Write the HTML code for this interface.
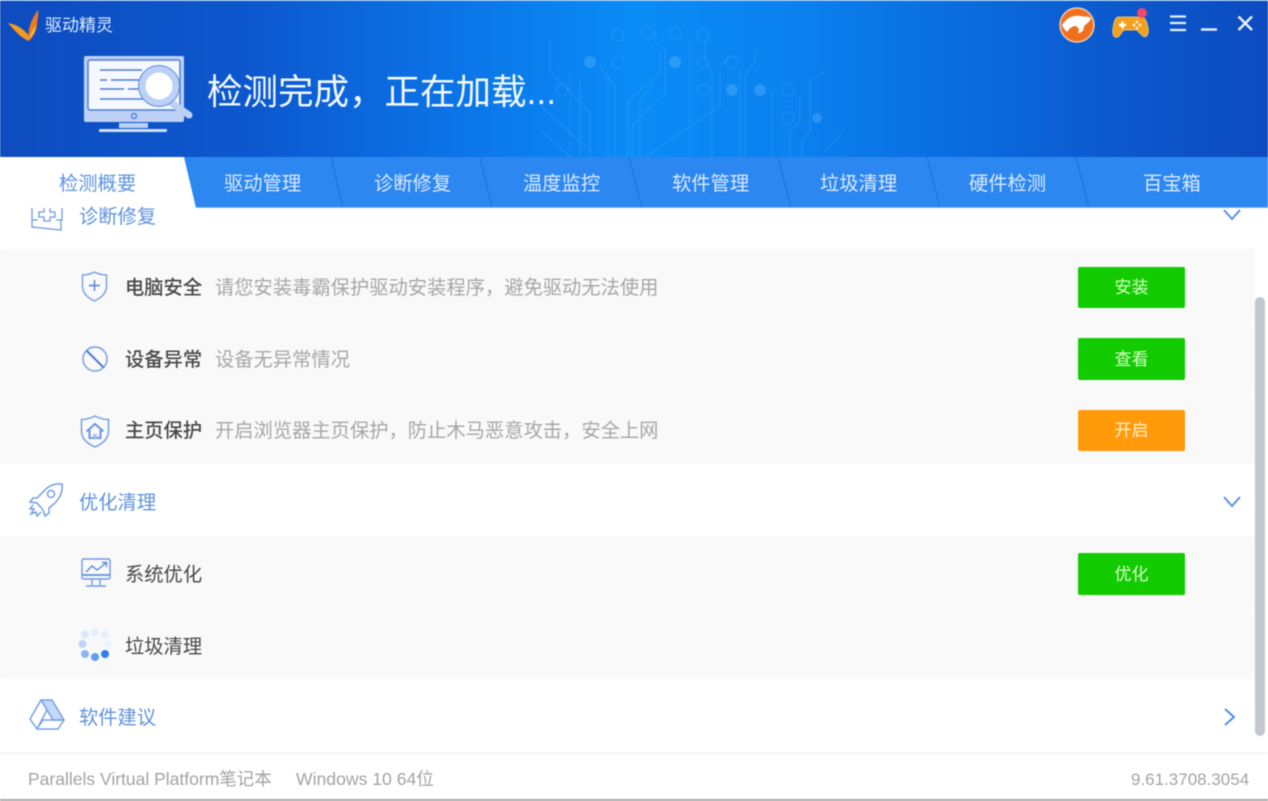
<!DOCTYPE html>
<html lang="zh-CN">
<head>
<meta charset="utf-8">
<title>驱动精灵</title>
<style>
html,body{margin:0;padding:0;background:#fff;}
#app{position:relative;width:1268px;height:801px;overflow:hidden;background:#fff;font-family:"Liberation Sans","Noto Sans CJK SC",sans-serif;filter:blur(.6px);}
#app div,#app svg{position:absolute;}
.t{white-space:nowrap;line-height:1;}
.hdr{left:0;top:1px;width:1268px;height:156px;background:linear-gradient(90deg,#0e4cbf 0%,#0d58cf 20%,#0b78ea 38%,#0a8cf7 50%,#0a82f0 62%,#0a6ee0 75%,#0c56cb 90%,#0d4bc1 100%);}
.tabbar{left:0;top:157px;width:1268px;height:51px;background:#2d87f1;border-bottom:0;}
.tab{top:175px;font-size:19.3px;color:#d9eaff;}
.sec{font-size:19.3px;color:#5f93dc;left:79px;}
.row{left:0;width:1255px;background:#f9f9f9;}
.name{left:125px;font-size:19.3px;color:#484848;}
.desc{left:215px;font-size:19.3px;color:#a6a6a6;}
.btn{left:1078px;width:107px;border-radius:2px;background:#12cb00;color:#d6ffc8;font-size:17px;text-align:center;}
</style>
</head>
<body>
<div id="app">
  <div class="hdr"></div>
  <svg style="left:540px;top:1px" width="340" height="156" viewBox="0 0 340 156" fill="none" stroke="#6cc0ff" stroke-opacity=".2" stroke-width="1.2">
    <path d="M10 40V70L50 112V156M30 70V156M60 65L75 85V156M115 30V40L125 50V92L92 125V156M115 80L100 100V156M120 50V72L88 100V156M40 80V156M68 75V156"/>
    <path d="M-10 95L50 150M-20 110L30 156M180 70V105L105 156M165 40V60L172 70V156M190 55L180 65M150 40V156M200 68V156M215 50V60L205 75V156M232 90V156M260 95V120L250 130V156M285 70L270 80V130L262 140V156M300 130V135L285 150"/>
    <circle cx="78" cy="34" r="6"/><circle cx="107" cy="32" r="6"/><circle cx="135" cy="32" r="6"/><circle cx="163" cy="34" r="6"/>
    <circle cx="78" cy="61" r="6"/><circle cx="163" cy="61" r="6"/><circle cx="192" cy="61" r="6"/>
    <circle cx="22" cy="89" r="6"/><circle cx="163" cy="89" r="6"/><circle cx="248" cy="89" r="6"/><circle cx="248" cy="117" r="6"/>
    <g fill="#6cc0ff" fill-opacity=".32" stroke="none"><circle cx="50" cy="61" r="6"/><circle cx="135" cy="61" r="6"/><circle cx="192" cy="89" r="6"/><circle cx="220" cy="89" r="6"/><circle cx="277" cy="117" r="5"/></g>
  </svg>
  <div style="left:0;top:0;width:1268px;height:1px;background:#8fc0ee"></div>

  <!-- logo -->
  <svg style="left:6px;top:8px" width="38" height="34" viewBox="0 0 38 34">
    <path d="M2 15C10 16 20 22 24 30L23 33C15 30 8 22 2 15Z" fill="#f59a1d"/>
    <path d="M23 33C21 22 25 12 32 2C33 8 31 12 31 17C30 24 27 29 23 33Z" fill="#ee7a1a"/>
    <path d="M23 31C24 25 27 21 30 18C30 23 27 28 23 31Z" fill="#f9b040"/>
  </svg>
  <div class="t" style="left:45px;top:17px;font-size:17px;color:#dcebff">驱动精灵</div>

  <!-- monitor -->
  <svg style="left:80px;top:52px" width="116" height="84" viewBox="0 0 116 84">
    <rect x="4" y="4" width="100" height="66" rx="2" fill="#bdd0f6"/>
    <rect x="8" y="8" width="92" height="50" rx="2" fill="#f5f8ff" stroke="#4d7fd6" stroke-width="1.5"/>
    <path d="M20 18H62M20 28H27M31 28H62M20 37H44M48 37H62M20 47H70" stroke="#4d7fd6" stroke-width="1.6"/>
    <path d="M87 48L109 63" stroke="#bdd0f6" stroke-width="7" stroke-linecap="round"/>
    <circle cx="79" cy="34" r="17" fill="#fff" stroke="#bdd0f6" stroke-width="7"/>
    <circle cx="79" cy="34" r="20.5" fill="none" stroke="#5d8fdc" stroke-width="1"/>
    <circle cx="54" cy="64" r="2.5" fill="none" stroke="#4d7fd6" stroke-width="1.4"/>
    <rect x="39" y="71" width="29" height="5" fill="#bdd0f6"/>
    <rect x="19" y="77" width="68" height="3" rx="1" fill="#cfe0fb"/>
  </svg>
  <div class="t" style="left:207px;top:75px;font-size:35.5px;color:#f2f8ff;font-weight:400">检测完成，正在加载...</div>

  <!-- top right icons -->
  <svg style="left:1058px;top:7px" width="38" height="38" viewBox="0 0 38 38">
    <circle cx="19" cy="18" r="17" fill="#f07020" stroke="#f7c9a8" stroke-width="1.5"/>
    <path d="M4 18C9 10 16 8 22 9C27 10 30 9 33 11C32 15 28 17 26 19C26 23 24 26 20 26C22 22 20 19 16 19C13 20 11 22 9 25C7 23 5 21 4 18Z" fill="#fff"/>
  </svg>
  <svg style="left:1112px;top:6px" width="40" height="36" viewBox="0 0 40 36">
    <path d="M7 11H29C33 11 35 16 36 22C37 29 34 32 31 30C28 28 26 24 24 24H13C10 24 9 29 6 31C2 32 0 29 1 23C2 16 3 11 7 11Z" fill="#f2a01e" stroke="#e8c06a" stroke-width="1"/>
    <path d="M7 19H14M10.500 15.500V22.500" stroke="#fff" stroke-width="2.400"/>
    <circle cx="25" cy="16" r="1.300" fill="#fff"/><circle cx="25" cy="22" r="1.300" fill="#fff"/><circle cx="22" cy="19" r="1.300" fill="#fff"/><circle cx="28" cy="19" r="1.300" fill="#fff"/>
    <circle cx="30" cy="7" r="5" fill="#f2476a"/>
  </svg>
  <svg style="left:1168px;top:12px" width="92" height="24" viewBox="0 0 92 24" stroke="#e4f0ff" fill="none">
    <path d="M2 4.500H18M2 11H18M2 18H18" stroke-width="2.200"/>
    <path d="M33 17.500H49" stroke-width="2.400"/>
    <path d="M70.500 4.500L84 18M84 4.500L70.500 18" stroke-width="2.600"/>
  </svg>

  <!-- tabs -->
  <div class="tabbar"></div>
  <svg style="left:0;top:157px" width="1268" height="51" viewBox="0 0 1268 51" fill="none">
    <path d="M0 0H184L196 51H0Z" fill="#fff"/>
    <g stroke="#1e6fd8" stroke-width="1"><path d="M331 0L343 51M480 0L492 51M629 0L642 51M778 0L791 51M927 0L940 51M1076 0L1089 51"/></g>
    <path d="M196 50.500H1268" stroke="#7cb5f7" stroke-width="1"/>
  </svg>
  <div class="t tab" style="left:59px;color:#5d93dc">检测概要</div>
  <div class="t tab" style="left:224px">驱动管理</div>
  <div class="t tab" style="left:374px">诊断修复</div>
  <div class="t tab" style="left:523px">温度监控</div>
  <div class="t tab" style="left:672px">软件管理</div>
  <div class="t tab" style="left:820px">垃圾清理</div>
  <div class="t tab" style="left:969px">硬件检测</div>
  <div class="t tab" style="left:1143px">百宝箱</div>

  <!-- rows -->
  <div class="row" style="top:249px;height:71px"></div>
  <div class="row" style="top:321px;height:71px"></div>
  <div class="row" style="top:393px;height:71px"></div>
  <div class="row" style="top:536px;height:72px"></div>
  <div class="row" style="top:609px;height:70px"></div>

  <!-- section 1 -->
  <svg style="left:30px;top:207px" width="36" height="25" viewBox="0 0 36 25" fill="none" stroke="#6f9be0" stroke-width="1.300">
    <path d="M2 1V13H8M32 1V13H26M2 13V20L31 23V13"/>
    <path d="M14 1V5H9V10H14V14H20V10H25V5H20V1" />
  </svg>
  <div class="t sec" style="top:208px">诊断修复</div>
  <svg style="left:1222px;top:208px" width="20" height="14" viewBox="0 0 20 14" fill="none" stroke="#5b93e8" stroke-width="2"><path d="M2 2L10 11L18 2"/></svg>

  <!-- 电脑安全 -->
  <svg style="left:80px;top:270px" width="29" height="33" viewBox="0 0 29 33" fill="none" stroke="#74a0e6" stroke-width="1.400">
    <path d="M14.500 2C18 4 22 5 26.500 5V16C26.500 23 21 28 14.500 31C8 28 2.500 23 2.500 16V5C7 5 11 4 14.500 2Z"/>
    <path d="M14.500 10V21M9 15.500H20" stroke="#4d82d8"/>
  </svg>
  <div class="t name" style="top:279px;font-weight:500">电脑安全</div>
  <div class="t desc" style="top:279px">请您安装毒霸保护驱动安装程序，避免驱动无法使用</div>
  <div class="btn" style="top:267px;height:41px;line-height:42px">安装</div>

  <!-- 设备异常 -->
  <svg style="left:81px;top:345px" width="28" height="28" viewBox="0 0 28 28" fill="none" stroke="#74a0e6" stroke-width="1.500">
    <circle cx="14" cy="14" r="12"/>
    <path d="M5.500 5.500L22.500 22.500" stroke="#4d7fd6" stroke-width="2"/>
  </svg>
  <div class="t name" style="top:351px;font-weight:500">设备异常</div>
  <div class="t desc" style="top:351px">设备无异常情况</div>
  <div class="btn" style="top:338px;height:42px;line-height:43px">查看</div>

  <!-- 主页保护 -->
  <svg style="left:79px;top:414px" width="32" height="35" viewBox="0 0 32 35" fill="none" stroke="#74a0e6" stroke-width="1.500">
    <path d="M16 2C20 4 25 5.500 29.500 5.500V17C29.500 25 23 30 16 33C9 30 2.500 25 2.500 17V5.500C7 5.500 12 4 16 2Z"/>
    <path d="M7.500 17.500L16 10L24.500 17.500M10.500 16V24H21.500V16" stroke="#6f96e6" stroke-width="2"/>
    <path d="M14 24V20H18V24" fill="#a9c2f5" stroke="none"/>
  </svg>
  <div class="t name" style="top:422px;font-weight:500">主页保护</div>
  <div class="t desc" style="top:422px">开启浏览器主页保护，防止木马恶意攻击，安全上网</div>
  <div class="btn" style="top:410px;height:41px;line-height:42px;background:#ff9a0a;color:#fff2d0">开启</div>

  <!-- 优化清理 -->
  <svg style="left:27px;top:481px" width="38" height="38" viewBox="0 0 38 38" fill="none" stroke="#74a0e6" stroke-width="1.500">
    <path d="M35 3C27 2 21 5 16 11L10 17L6 17L3 21L10 22L16 29L18 35L22 32L22 27L28 22C33 17 36 11 35 3Z"/>
    <circle cx="24" cy="13" r="3.500"/>
    <path d="M6 24L3 28L7 28L4 33L9 31L10 35L14 31"/>
  </svg>
  <div class="t sec" style="top:494px">优化清理</div>
  <svg style="left:1222px;top:495px" width="20" height="14" viewBox="0 0 20 14" fill="none" stroke="#5b93e8" stroke-width="2"><path d="M2 2L10 11L18 2"/></svg>

  <!-- 系统优化 -->
  <svg style="left:80px;top:557px" width="32" height="32" viewBox="0 0 32 32" fill="none" stroke="#6f9be0" stroke-width="1.400">
    <rect x="2" y="2" width="28" height="20" rx="1.500"/>
    <path d="M2 18H30" stroke-width="2"/>
    <path d="M6 15L12 9L17 13L26 6M22 5.500H26.500V10" stroke="#5d8fdc"/>
    <path d="M12 22V28M20 22V28M6 29H26"/>
  </svg>
  <div class="t name" style="top:566px">系统优化</div>
  <div class="btn" style="top:553px;height:42px;line-height:43px">优化</div>

  <!-- 垃圾清理 -->
  <svg style="left:76px;top:626px" width="38" height="36" viewBox="0 0 38 36">
    <circle cx="19" cy="6" r="4" fill="#e6f0fd"/>
    <circle cx="29" cy="8.500" r="4" fill="#e6f0fd"/>
    <circle cx="9" cy="8.500" r="4" fill="#dbe8fb"/>
    <circle cx="32" cy="18" r="4" fill="#eef4fd"/>
    <circle cx="6.500" cy="18" r="4" fill="#bcd6fa"/>
    <circle cx="9" cy="28" r="4" fill="#88b6f5"/>
    <circle cx="19" cy="31" r="4" fill="#5f9df2"/>
    <circle cx="29" cy="28" r="4" fill="#2f7fec"/>
  </svg>
  <div class="t name" style="top:638px">垃圾清理</div>

  <!-- 软件建议 -->
  <svg style="left:28px;top:698px" width="38" height="34" viewBox="0 0 38 34" fill="none" stroke="#74a0e6" stroke-width="1.500" stroke-linejoin="round">
    <path d="M13 2H24L36 22H25Z" fill="#c4d8f8"/>
    <path d="M13 2L2 21L9 31L19 12"/>
    <path d="M9 31H30L36 22H15L11 28"/>
  </svg>
  <div class="t sec" style="top:709px">软件建议</div>
  <svg style="left:1223px;top:707px" width="14" height="20" viewBox="0 0 14 20" fill="none" stroke="#4f8fe8" stroke-width="2"><path d="M2 2L11 10L2 18"/></svg>

  <!-- scrollbar -->
  <div style="left:1255px;top:297px;width:10px;height:439px;border-radius:5px;background:#c3c8cd"></div>

  <!-- footer -->
  <div style="left:0;top:752px;width:1268px;height:2px;background:#f5f5f5"></div>
  <div class="t" style="left:28px;top:771px;font-size:17.5px;color:#a3a3a3">Parallels Virtual Platform笔记本</div>
  <div class="t" style="left:296px;top:771px;font-size:17.6px;color:#a3a3a3">Windows 10 64位</div>
  <div class="t" style="left:1131px;top:771px;font-size:17px;color:#a3a3a3">9.61.3708.3054</div>
  <div style="left:0;top:799px;width:1268px;height:2px;background:#a8a8a8"></div>
</div>
</body>
</html>
